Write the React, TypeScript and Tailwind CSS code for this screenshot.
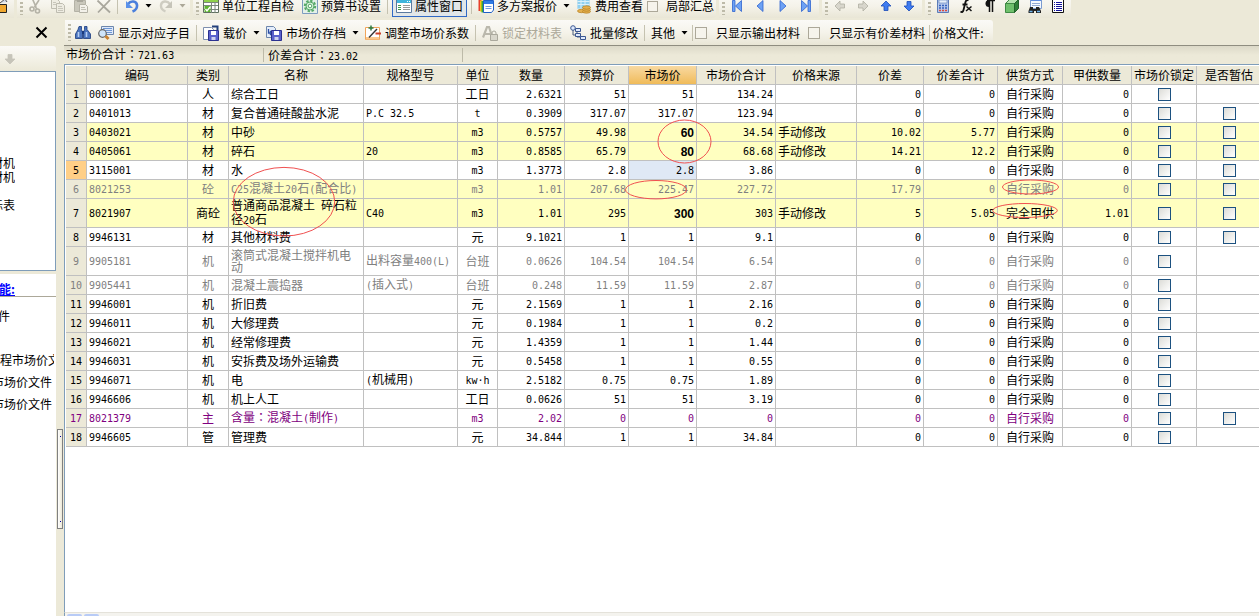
import type { ReactNode } from "react";

const UI = "font-['Noto_Sans_CJK_SC',sans-serif] text-[12px] leading-[14px] text-black";

/* ---------- text ---------- */

function Mixed({ text }: { text: string }) {
  return (
    <>
      {text.split(/([\x20-\x7e·]+|：)/).map((part, i) => {
        if (part === "：") {
          return (
            <span key={i} className="font-['Noto_Sans_CJK_TC',sans-serif]">
              {part}
            </span>
          );
        }
        return i % 2 === 1 ? (
          <span key={i} className="whitespace-pre-wrap font-['DejaVu_Sans_Mono',monospace] text-[10px]">
            {part}
          </span>
        ) : (
          part
        );
      })}
    </>
  );
}

/* ---------- icons ---------- */

function Svg({ children, w = 16 }: { children: ReactNode; w?: number }) {
  return (
    <svg width={w} height={16} viewBox={`0 0 ${w} 16`} className="shrink-0" aria-hidden="true">
      {children}
    </svg>
  );
}

const CutIcon = () => (
  <Svg>
    <g fill="none" stroke="#b4b2a6" strokeWidth="1.6">
      <path d="M5.500 1 9 9M12 2 7.500 9" />
      <circle cx="5" cy="11" r="2" />
      <circle cx="10.500" cy="13" r="2" />
      <path d="M8 8.500 10 11" />
    </g>
  </Svg>
);
const CopyIcon = () => (
  <Svg>
    <g fill="#eeece2" stroke="#bebcb0">
      <path d="M1.500 1.500h6l2 2v7h-8z" />
      <path d="M6.500 5.500h6l2 2v7h-8z" />
    </g>
    <path d="M8 8.500h4M8 10.500h5M8 12.500h5M3 4.500h3M3 6.500h3" stroke="#c8c6bb" />
  </Svg>
);
const PasteIcon = () => (
  <Svg>
    <path d="M1.500 2.500h11v11h-11z" fill="#c9c7bb" stroke="#b4b2a6" />
    <path d="M4 1h6v3H4z" fill="#a9a79c" />
    <path d="M6.500 6.500h6l2 2v6h-8z" fill="#f3f1ea" stroke="#b4b2a6" />
    <path d="M8 9.500h4M8 11.500h5" stroke="#c2c0b4" />
  </Svg>
);
const DeleteIcon = () => (
  <Svg>
    <path d="M1.500 2.500 14 14.500M14 2 2 14.500" stroke="#a9a79d" strokeWidth="1.800" fill="none" />
  </Svg>
);
const UndoIcon = () => (
  <Svg>
    <path d="M4 6C7 2 12.500 3 13 7c.3 3-2 5.500-4.500 6.500" stroke="#4a7fdc" strokeWidth="2.600" fill="none" />
    <path d="M2 3v7h7z" fill="#5b92ea" />
  </Svg>
);
const RedoIcon = () => (
  <Svg>
    <path d="M12 6C9 2 3.500 3 3 7c-.3 3 2 5.500 4.500 6.500" stroke="#cfcdc2" strokeWidth="2.400" fill="none" />
    <path d="M14 3v7H7z" fill="#c6c4b9" />
  </Svg>
);
const SheetIcon = () => (
  <Svg>
    <path d="M.5.5h15v14H.5z" fill="#fff" stroke="#5f6f5f" />
    <path d="M1 1h14v3H1z" fill="#8ed04b" />
    <path d="M1 4.500h14M1 7.500h14M1 11.500h14M8.500 4v11M12 4v11" stroke="#7b877b" />
    <path d="M1.500 8h6v6h-6z" fill="#5db32f" />
    <path d="m2.500 11 1.500 2 3-4" stroke="#fff" strokeWidth="1.300" fill="none" />
  </Svg>
);
const GearIcon = () => (
  <Svg>
    <path d="M.5.5h15v15H.5z" fill="#e3f1e8" stroke="#7d9cc0" />
    <circle cx="8" cy="8" r="5.200" fill="none" stroke="#55a868" strokeWidth="2" strokeDasharray="2.400 1.600" />
    <circle cx="8" cy="8" r="4" fill="#d6f0d9" stroke="#55a868" />
    <circle cx="8" cy="8" r="1.800" fill="#fff" stroke="#55a868" />
  </Svg>
);
const PanelIcon = () => (
  <Svg>
    <path d="M.5 1.500h15v13H.5z" fill="#fff" stroke="#5b7aa0" />
    <path d="M1 2h14v3H1z" fill="#3fb5dc" />
    <path d="M11 3.500h1M13 3.500h1" stroke="#fff" />
    <path d="M2 7.500h3M2 9.500h3M2 11.500h3" stroke="#3f9a4a" />
    <path d="M7 7.500h7M7 9.500h7M7 11.500h7" stroke="#9a9a9a" />
  </Svg>
);
const PlansIcon = () => (
  <Svg>
    <path d="M.5 2h3v11h-3z" fill="#e8402a" />
    <path d="M2 2.500h3v11H2z" fill="#f5c518" />
    <path d="M3.500 3h3v11.500h-3z" fill="#38a838" />
    <path d="M5.500 2.500h10V12l-2 2.500h-8z" fill="#fff" stroke="#1f5fc9" />
    <path d="M6 3h9v3H6z" fill="#2f7be4" />
    <path d="M7.500 8.500h6M7.500 10.500h6" stroke="#6f9ade" />
  </Svg>
);
const CostIcon = () => (
  <Svg>
    <path d="M1.500.5h12v10h-12z" fill="#8fd0f0" stroke="#b9dcec" />
    <path d="M1.500 3.500h12M1.500 6.500h12M5 .5v10M9 .5v10" stroke="#d9f0fa" />
    <g fill="#e3b04e" stroke="#b47d1d" strokeWidth=".7">
      <ellipse cx="5.500" cy="13" rx="4" ry="1.700" />
      <ellipse cx="10.500" cy="13.500" rx="4" ry="1.700" />
      <ellipse cx="10.500" cy="11.500" rx="4" ry="1.700" />
      <ellipse cx="10.500" cy="9.500" rx="4" ry="1.700" />
    </g>
  </Svg>
);
const NavIcon = ({ bar, back }: { bar?: boolean; back?: boolean }) => (
  <Svg>
    <g transform={back ? "translate(16 0) scale(-1 1)" : undefined} fill="#6ea2f4" stroke="#2f63cf" strokeWidth=".8">
      {bar ? (
        <>
          <path d="M3.500 2.500v11l6-5.500z" />
          <path d="M10 2.500h2.500v11H10z" />
        </>
      ) : (
        <path d="M5 2.500v11l6-5.500z" />
      )}
    </g>
  </Svg>
);
const ArrowIcon = ({ turn, fill, line }: { turn: number; fill: string; line: string }) => (
  <Svg>
    <path d="M8 3 13 8H10v4.500H6V8H3z" transform={`rotate(${turn} 8 8)`} fill={fill} stroke={line} strokeWidth=".8" />
  </Svg>
);
const CalcIcon = () => (
  <Svg>
    <path d="M2.500.5h11v14h-11z" fill="#b5c8ec" stroke="#5c7cb8" />
    <path d="M4 2h8v3H4z" fill="#e6f0fb" stroke="#5c7cb8" strokeWidth=".6" />
    <path d="M4 7.500h8M4 10h8" stroke="#3460bd" strokeWidth="1.600" strokeDasharray="2 1" />
    <path d="M4 12.500h8" stroke="#df4a3a" strokeWidth="1.600" strokeDasharray="2 1" />
  </Svg>
);
const FxIcon = () => (
  <Svg>
    <path d="M10.500 2.500C8.500 1 7.500 3 7 6L5.500 12c-.4 2-1.500 2.500-3 1.500M4.500 6.500h5" stroke="#111" strokeWidth="1.800" fill="none" />
    <path d="m8.500 8.500 5 4.500M13.500 8.500 8 13" stroke="#111" strokeWidth="1.500" />
  </Svg>
);
const PilcrowIcon = () => (
  <Svg>
    <path d="M8.500 14V2.500M11.500 14V2.500M6 2.500h8" stroke="#111" strokeWidth="1.500" />
    <path d="M8 2a3.500 3.500 0 0 0 0 7z" fill="#111" />
  </Svg>
);
const CubeIcon = () => (
  <Svg>
    <path d="M1.500 5.500h9v9h-9z" fill="#6fc06c" stroke="#3f8a45" />
    <path d="m1.500 5.500 4-4h9l-4 4z" fill="#b4e2ae" stroke="#3f8a45" />
    <path d="m10.500 5.500 4-4v9l-4 4z" fill="#2f8038" stroke="#23632b" />
  </Svg>
);
const FindListIcon = () => (
  <Svg>
    <path d="M3.500.5h11v10h-11z" fill="#f4f8ff" stroke="#7b9bd0" />
    <path d="M4 1h10v2H4z" fill="#5d8be0" />
    <path d="M5 5.500h8M5 7.500h8" stroke="#91a9d4" />
    <path d="M3 9h3v2h3V9h3l2 4v2H9v-2H7v2H1.500v-2z" fill="#222" />
    <path d="M2.500 13.500h3M10 13.500h3" stroke="#72b7ef" strokeWidth="1.500" />
  </Svg>
);
const ListIcon = () => (
  <Svg>
    <path d="M2.500 1.500h11v13h-11z" fill="#fff" stroke="#111" />
    <path d="M4 4.500h1M4 6.500h1M4 8.500h1M4 10.500h1M4 12.500h1M6 4.500h6M6 6.500h6M6 8.500h6M6 10.500h6M6 12.500h6" stroke="#14149a" />
  </Svg>
);
const BinocularsIcon = () => (
  <Svg>
    <g fill="#4a74be" stroke="#1b3a7c" strokeWidth=".8">
      <path d="M4 1.500h2.500v3l1 3v6H.5V9L3 4.500z" />
      <path d="M9.500 1.500H12v3L15.500 9v4.500h-7v-6l1-3z" />
    </g>
    <path d="M7 6h2v3H7z" fill="#1b3a7c" />
    <path d="M3.500 7v5M11.500 7v5" stroke="#b5cdf3" strokeWidth="1.600" />
  </Svg>
);
const InspectIcon = () => (
  <Svg>
    <path d="M3.500 1.500h12v8h-12z" fill="#dfe9fa" stroke="#6d86ac" />
    <path d="M5 3.500h9M5 5.500h9M8 7.500h6" stroke="#6d96d4" />
    <circle cx="4.500" cy="8.500" r="3.800" fill="#cfe5fa" stroke="#666" strokeWidth="1.200" />
    <path d="m7.500 11 3 3" stroke="#c98232" strokeWidth="3" />
  </Svg>
);
const Floppy = () => (
  <g>
    <path d="M5.500 5.500h10v10h-10z" fill="#5a62cc" stroke="#2b3190" />
    <path d="M8 6h5v4H8z" fill="#fff" />
    <path d="M8.500 12h4v3h-4z" fill="#cfd3ef" />
  </g>
);
const LoadIcon = () => (
  <Svg>
    <path d="M.5 2.500h8l2 2v10H.5z" fill="#fff" stroke="#7d8fae" />
    <path d="M9 1.500h5.500V5" fill="none" stroke="#23407c" strokeWidth="2" />
    <Floppy />
  </Svg>
);
const ArchiveIcon = () => (
  <Svg>
    <path d="M.5 1.500h7l2 2v9h-9z" fill="#e4edfa" stroke="#6d86ac" />
    <path d="M2.500 4v4h3M4 6l2 2-2 2" fill="none" stroke="#2b4fa5" strokeWidth="1.300" />
    <Floppy />
  </Svg>
);
const AdjustIcon = () => (
  <Svg>
    <path d="M.5 2.500h14v12H.5z" fill="#fff" stroke="#f0a45a" />
    <path d="M1 12h13v2.500H1z" fill="#fbc98d" />
    <path d="m4 12.500 8-8.500" stroke="#333" strokeWidth="1.400" />
    <path d="M6 .5v5M3.500 3h5" stroke="#2f7a3f" strokeWidth="1.500" />
    <path d="M10.500 8.500H16" stroke="#c9402c" strokeWidth="2" />
  </Svg>
);
const LockTextIcon = () => (
  <Svg>
    <path d="M1 12.500 5 2h2l3.500 10.500M2.500 9h7" stroke="#bab8ac" strokeWidth="2.200" fill="none" />
    <path d="M8.500 9.500h7v6h-7z" fill="#d8d6cb" stroke="#aaa89c" />
    <path d="M10 9.500V8a2 2 0 0 1 4 0v1.500" fill="none" stroke="#aaa89c" />
  </Svg>
);
const BatchIcon = () => (
  <Svg>
    <path d="M3 3v7h4M7 5v7h4" stroke="#4b5c7a" fill="none" />
    <g fill="#dfeafd" stroke="#3a5690">
      <circle cx="3" cy="3" r="2.300" />
      <path d="M5.500 3.500h5v3h-5zM5.500 8.500h5v3h-5zM10.500 11.500h5v3h-5z" />
    </g>
  </Svg>
);

/* ---------- toolbar parts ---------- */

function Group({ children }: { children: ReactNode }) {
  return (
    <div className="flex h-full shrink-0 items-center rounded-r-[3px] bg-linear-to-b from-[#fbfaf7] via-[#f5f3ea] to-[#e9e6d6] pr-[2px] pl-[3px]">
      <span className="h-[17px] w-[3px] bg-[repeating-linear-gradient(to_bottom,#bdbaa8_0_2px,transparent_2px_4px)]" />
      {children}
    </div>
  );
}

const Sep = () => <span className="mx-[2px] h-[16px] w-px shrink-0 bg-[#c5c2b0]" />;

function IconButton({ label, children }: { label: string; children: ReactNode }) {
  return (
    <button type="button" aria-label={label} className="flex h-[22px] w-[23px] shrink-0 items-center justify-center">
      {children}
    </button>
  );
}

function Tool({ icon, text, wide, off }: { icon?: ReactNode; text: string; wide?: boolean; off?: boolean }) {
  return (
    <button
      type="button"
      disabled={off}
      className={`flex h-[22px] shrink-0 items-center px-1 whitespace-nowrap ${wide ? "gap-1" : "gap-[3px]"} ${off ? "text-[#aca899]" : ""}`}
    >
      {icon}
      {text}
    </button>
  );
}

function Caret({ label, off }: { label: string; off?: boolean }) {
  return (
    <button type="button" aria-label={label} className="flex h-[22px] w-[11px] shrink-0 items-center justify-center">
      <svg width="7" height="4" viewBox="0 0 7 4" aria-hidden="true">
        <path d="M.5 0h6L3.500 3.500z" fill={off ? "#aca899" : "#000"} />
      </svg>
    </button>
  );
}

function BarCheck({ text }: { text: string }) {
  return (
    <label className="mr-[8px] flex shrink-0 items-center gap-[9px] whitespace-nowrap">
      <input type="checkbox" className="size-[12px] appearance-none border border-[#aca899] bg-[#f6f4ec]" />
      {text}
    </label>
  );
}

function TopToolbar() {
  return (
    <header className="-mt-[6px] flex h-[24px] shrink-0 gap-[3px] leading-[12px]">
      <div className="flex w-[14px] items-center overflow-hidden bg-linear-to-b from-[#fbfaf7] to-[#e9e6d6]">
        <svg width="8" height="16" viewBox="0 0 8 16" aria-hidden="true">
          <path d="M0 6.500h6.500v8H0" fill="#f0a830" stroke="#222" />
          <path d="m0 5 5-4 2 3" fill="#cfd8e8" stroke="#555" />
        </svg>
      </div>
      <Group>
        <IconButton label="剪切"><CutIcon /></IconButton>
        <IconButton label="复制"><CopyIcon /></IconButton>
        <IconButton label="粘贴"><PasteIcon /></IconButton>
        <IconButton label="删除"><DeleteIcon /></IconButton>
        <Sep />
        <IconButton label="撤销"><UndoIcon /></IconButton>
        <Caret label="撤销列表" />
        <IconButton label="恢复"><RedoIcon /></IconButton>
        <Caret label="恢复列表" off />
      </Group>
      <Group>
        <Tool icon={<SheetIcon />} text="单位工程自检" />
        <Tool icon={<GearIcon />} text="预算书设置" />
        <Sep />
        <button
          type="button"
          aria-pressed="true"
          className="mx-[2px] flex h-[22px] shrink-0 items-center gap-[3px] border border-[#316ac5] bg-[#e1e6e8] px-[3px] whitespace-nowrap"
        >
          <PanelIcon />
          属性窗口
        </button>
        <Sep />
        <Tool icon={<PlansIcon />} text="多方案报价" />
        <Caret label="多方案报价列表" />
        <Tool icon={<CostIcon />} text="费用查看" />
        <label className="flex shrink-0 items-center gap-[8px] whitespace-nowrap">
          <input type="checkbox" className="size-[11px] appearance-none border border-[#aca899] bg-[#f6f4ec]" />
          局部汇总
        </label>
      </Group>
      <Group>
        <IconButton label="首行"><NavIcon bar back /></IconButton>
        <IconButton label="上一行"><NavIcon back /></IconButton>
        <IconButton label="下一行"><NavIcon /></IconButton>
        <IconButton label="末行"><NavIcon bar /></IconButton>
      </Group>
      <Group>
        <IconButton label="左移"><ArrowIcon turn={-90} fill="#d8d6cc" line="#b0aea2" /></IconButton>
        <IconButton label="右移"><ArrowIcon turn={90} fill="#d8d6cc" line="#b0aea2" /></IconButton>
        <IconButton label="上移"><ArrowIcon turn={0} fill="#3f7cf0" line="#1c4bb8" /></IconButton>
        <IconButton label="下移"><ArrowIcon turn={180} fill="#3f7cf0" line="#1c4bb8" /></IconButton>
      </Group>
      <Group>
        <IconButton label="计算器"><CalcIcon /></IconButton>
        <IconButton label="函数"><FxIcon /></IconButton>
        <IconButton label="段落"><PilcrowIcon /></IconButton>
        <IconButton label="图块"><CubeIcon /></IconButton>
        <IconButton label="查找"><FindListIcon /></IconButton>
        <IconButton label="清单"><ListIcon /></IconButton>
      </Group>
    </header>
  );
}

function PriceToolbar() {
  return (
    <div className="flex h-[28px] shrink-0 border-b border-[#8f8d80] pt-[2px] pl-px">
      <Group>
        <IconButton label="查找"><BinocularsIcon /></IconButton>
        <Tool wide icon={<InspectIcon />} text="显示对应子目" />
        <Sep />
        <Tool wide icon={<LoadIcon />} text="载价" />
        <Caret label="载价列表" />
        <Tool wide icon={<ArchiveIcon />} text="市场价存档" />
        <Caret label="存档列表" />
        <Tool wide icon={<AdjustIcon />} text="调整市场价系数" />
        <Sep />
        <Tool wide off icon={<LockTextIcon />} text="锁定材料表" />
        <Tool wide icon={<BatchIcon />} text="批量修改" />
        <Sep />
        <Tool text="其他" />
        <Caret label="其他列表" />
        <Sep />
        <BarCheck text="只显示输出材料" />
        <BarCheck text="只显示有价差材料" />
        <span className="-ml-1 h-[16px] w-px bg-[#c5c2b0]" />
        <span className="pr-[8px] pl-[2px] whitespace-nowrap">价格文件:</span>
      </Group>
    </div>
  );
}

/* ---------- left side ---------- */

function SidePanel() {
  return (
    <aside className="flex w-[56px] shrink-0 flex-col">
      <div className="flex h-[28px] items-center justify-end pr-[8px]">
        <button type="button" aria-label="关闭">
          <svg width="13" height="13" viewBox="0 0 13 13" aria-hidden="true">
            <path d="m1.500 1.500 10 10M11.500 1.500l-10 10" stroke="#000" strokeWidth="2" />
          </svg>
        </button>
      </div>
      <div className="flex h-[25px] items-center rounded-tr-[3px] bg-linear-to-b from-[#fbfaf7] to-[#ece9d8] pl-[2px]">
        <ArrowIcon turn={180} fill="#c6c4b9" line="#c6c4b9" />
      </div>
      <div className="flex h-[200px] flex-col border-y border-r border-[#7f9db9] bg-white pt-[84px]">
        <span className="flex w-[15px] justify-end overflow-hidden whitespace-nowrap">材机</span>
        <span className="flex w-[15px] justify-end overflow-hidden whitespace-nowrap">材机</span>
        <span className="mt-[14px] flex w-[15px] justify-end overflow-hidden whitespace-nowrap">标表</span>
      </div>
      <div className="mt-[3px] flex flex-1 flex-col bg-white pt-[8px]">
        <div className="border-b border-[#aca899]">
          <a href="#functions" className="flex w-[15px] justify-end overflow-hidden font-bold whitespace-nowrap text-[#0000ff] underline">
            能:
          </a>
        </div>
        <span className="mt-[12px] flex w-[10px] justify-end overflow-hidden whitespace-nowrap">件</span>
        <span className="mt-[30px] w-[54px] overflow-hidden whitespace-nowrap">程市场价文件</span>
        <span className="mt-[8px] flex w-[52px] justify-end overflow-hidden whitespace-nowrap">市场价文件</span>
        <span className="mt-[8px] flex w-[52px] justify-end overflow-hidden whitespace-nowrap">市场价文件</span>
      </div>
    </aside>
  );
}

function Splitter() {
  return (
    <div className="flex w-[8px] shrink-0 flex-col items-center pt-[411px]">
      <div className="flex h-[100px] w-[6px] flex-col items-center justify-between border border-[#808080] bg-linear-to-r from-white to-[#ece9d8] py-[6px]">
        <span className="size-px bg-[#0000a0]" />
        <span className="size-px bg-[#0000a0]" />
      </div>
    </div>
  );
}

/* ---------- table ---------- */

type Tone = "" | "gray" | "purple";
type Row = {
  cells: string[];
  tone?: Tone;
  yellow?: boolean;
  tall?: boolean;
  bold?: boolean;
  picked?: boolean;
  estimate?: boolean;
};

const columns: { name: string; width: string; align: string }[] = [
  { name: "编码", width: "w-[101px]", align: "text-left" },
  { name: "类别", width: "w-[41px]", align: "text-center" },
  { name: "名称", width: "w-[135px]", align: "text-left" },
  { name: "规格型号", width: "w-[94px]", align: "text-left" },
  { name: "单位", width: "w-[40px]", align: "text-center" },
  { name: "数量", width: "w-[67px]", align: "text-right" },
  { name: "预算价", width: "w-[64px]", align: "text-right" },
  { name: "市场价", width: "w-[68px]", align: "text-right" },
  { name: "市场价合计", width: "w-[79px]", align: "text-right" },
  { name: "价格来源", width: "w-[81px]", align: "text-left" },
  { name: "价差", width: "w-[67px]", align: "text-right" },
  { name: "价差合计", width: "w-[74px]", align: "text-right" },
  { name: "供货方式", width: "w-[65px]", align: "text-center" },
  { name: "甲供数量", width: "w-[69px]", align: "text-right" },
];

const rows: Row[] = [
  { cells: ["0001001", "人", "综合工日", "", "工日", "2.6321", "51", "51", "134.24", "", "0", "0", "自行采购", "0"] },
  { cells: ["0401013", "材", "复合普通硅酸盐水泥", "P.C 32.5", "t", "0.3909", "317.07", "317.07", "123.94", "", "0", "0", "自行采购", "0"], estimate: true },
  { cells: ["0403021", "材", "中砂", "", "m3", "0.5757", "49.98", "60", "34.54", "手动修改", "10.02", "5.77", "自行采购", "0"], yellow: true, bold: true, estimate: true },
  { cells: ["0405061", "材", "碎石", "20", "m3", "0.8585", "65.79", "80", "68.68", "手动修改", "14.21", "12.2", "自行采购", "0"], yellow: true, bold: true, estimate: true },
  { cells: ["3115001", "材", "水", "", "m3", "1.3773", "2.8", "2.8", "3.86", "", "0", "0", "自行采购", "0"], picked: true, estimate: true },
  { cells: ["8021253", "砼", "C25混凝土20石(配合比)", "", "m3", "1.01", "207.68", "225.47", "227.72", "", "17.79", "0", "自行采购", "0"], yellow: true, tone: "gray", estimate: true },
  { cells: ["8021907", "商砼", "普通商品混凝土 碎石粒径20石", "C40", "m3", "1.01", "295", "300", "303", "手动修改", "5", "5.05", "完全甲供", "1.01"], yellow: true, bold: true, tall: true, estimate: true },
  { cells: ["9946131", "材", "其他材料费", "", "元", "9.1021", "1", "1", "9.1", "", "0", "0", "自行采购", "0"], estimate: true },
  { cells: ["9905181", "机", "滚筒式混凝土搅拌机电动", "出料容量400(L)", "台班", "0.0626", "104.54", "104.54", "6.54", "", "0", "0", "自行采购", "0"], tone: "gray", tall: true },
  { cells: ["9905441", "机", "混凝土震捣器", "(插入式)", "台班", "0.248", "11.59", "11.59", "2.87", "", "0", "0", "自行采购", "0"], tone: "gray" },
  { cells: ["9946001", "机", "折旧费", "", "元", "2.1569", "1", "1", "2.16", "", "0", "0", "自行采购", "0"] },
  { cells: ["9946011", "机", "大修理费", "", "元", "0.1984", "1", "1", "0.2", "", "0", "0", "自行采购", "0"] },
  { cells: ["9946021", "机", "经常修理费", "", "元", "1.4359", "1", "1", "1.44", "", "0", "0", "自行采购", "0"] },
  { cells: ["9946031", "机", "安拆费及场外运输费", "", "元", "0.5458", "1", "1", "0.55", "", "0", "0", "自行采购", "0"] },
  { cells: ["9946071", "机", "电", "(机械用)", "kw·h", "2.5182", "0.75", "0.75", "1.89", "", "0", "0", "自行采购", "0"] },
  { cells: ["9946606", "机", "机上人工", "", "工日", "0.0626", "51", "51", "3.19", "", "0", "0", "自行采购", "0"] },
  { cells: ["8021379", "主", "含量：混凝土(制作)", "", "m3", "2.02", "0", "0", "0", "", "0", "0", "自行采购", "0"], tone: "purple", estimate: true },
  { cells: ["9946605", "管", "管理费", "", "元", "34.844", "1", "1", "34.84", "", "0", "0", "自行采购", "0"] },
];

const LINE = "border-b border-[#c0c0c0] p-0";
const LAST = "border-b border-[#c0c0c0] py-0 pr-0 pl-[2px]";
const PRICE = 7;

function CellCheck({ label }: { label: string }) {
  return (
    <input
      type="checkbox"
      aria-label={label}
      className="mx-auto block size-[13px] appearance-none border border-[#1c5180] bg-linear-to-br from-[#dcdcd7] to-white"
    />
  );
}

function PriceTable() {
  return (
    <table className="w-full table-fixed border-separate border-spacing-0 leading-[12px]">
      <thead>
        <tr className="h-[19px] bg-[#ece9d8]">
          <th aria-label="序号" className={`w-[21px] border-r ${LINE}`} />
          {columns.map((c, i) => (
            <th
              key={c.name}
              className={`border-r font-normal whitespace-nowrap ${c.width} ${LINE} ${i === PRICE ? "bg-linear-to-b from-[#f8d9a0] to-[#f0bb58]" : ""}`}
            >
              {c.name}
            </th>
          ))}
          <th className={`w-[65px] border-r font-normal whitespace-nowrap ${LINE}`}>市场价锁定</th>
          <th className={`font-normal whitespace-nowrap ${LAST}`}>是否暂估</th>
        </tr>
      </thead>
      <tbody>
        {rows.map((r, n) => {
          const tone = r.tone === "gray" ? "text-[#808080]" : r.tone === "purple" ? "text-[#800080]" : "";
          return (
            <tr key={r.cells[0]} className={`${r.tall ? "h-[29px]" : "h-[19px]"} ${r.yellow ? "bg-[#ffffc0]" : "bg-white"} ${tone}`}>
              <th className={`border-r text-center font-normal ${LINE} ${r.picked ? "bg-[#ffcf87]" : "bg-[#ece9d8]"}`}>
                <Mixed text={String(n + 1)} />
              </th>
              {r.cells.map((text, i) => (
                <td
                  key={i}
                  className={`border-r border-b border-[#c0c0c0] px-[2px] py-0 ${columns[i].align} ${r.picked && i === PRICE ? "bg-[#dfe8f5]" : ""}`}
                >
                  {r.bold && i === PRICE ? (
                    <b className="font-['Liberation_Sans',sans-serif]">{text}</b>
                  ) : (
                    <Mixed text={text} />
                  )}
                </td>
              ))}
              <td className={`border-r ${LINE}`}>
                <CellCheck label={`${r.cells[2]} 市场价锁定`} />
              </td>
              <td className={LAST}>{r.estimate && <CellCheck label={`${r.cells[2]} 是否暂估`} />}</td>
            </tr>
          );
        })}
      </tbody>
    </table>
  );
}

function RedMarks() {
  return (
    <svg className="pointer-events-none absolute top-px left-px" width="1000" height="180" viewBox="0 0 1000 180" aria-hidden="true">
      <g fill="none" stroke="#f05050" strokeWidth="1">
        <ellipse cx="218" cy="135.700" rx="50.700" ry="34.300" />
        <ellipse cx="618.500" cy="75.500" rx="26.500" ry="21.500" />
        <ellipse cx="590" cy="123.700" rx="30.500" ry="9.200" />
        <ellipse cx="964.500" cy="121" rx="28" ry="7" />
        <ellipse cx="959" cy="144.500" rx="32.300" ry="7" />
      </g>
    </svg>
  );
}

export default function App() {
  return (
    <div className={`flex h-screen flex-col overflow-hidden bg-[#ece9d8] ${UI}`}>
      <TopToolbar />
      <div className="flex min-h-0 flex-1">
        <SidePanel />
        <Splitter />
        <main className="flex min-w-0 flex-1 flex-col">
          <PriceToolbar />
          <div className="flex h-[18px] shrink-0 items-center bg-linear-to-b from-[#dcd9c8] via-[#ece9d8] to-[#ece9d8] pl-[2px]">
            <span className="w-[197px]"><Mixed text="市场价合计：721.63" /></span>
            <span className="h-[14px] w-[199px] border-l border-[#bdbaa8] pl-[4px]"><Mixed text="价差合计：23.02" /></span>
            <span className="h-[14px] border-l border-[#bdbaa8]" />
          </div>
          <div className="relative min-h-0 flex-1 border-t border-l border-[#7f9db9] bg-white pt-px pl-px">
            <PriceTable />
            <RedMarks />
          </div>
          <div className="flex h-[4px] shrink-0 gap-[2px] border-t border-l border-t-[#e4e2da] border-l-[#7f9db9] bg-[#f4f3ee] pl-[2px]">
            <span className="mt-px h-[2px] w-[15px] rounded-t-[2px] bg-[#b8cbf6]" />
            <span className="mt-px h-[2px] w-[15px] rounded-t-[2px] bg-[#b8cbf6]" />
          </div>
        </main>
      </div>
    </div>
  );
}
